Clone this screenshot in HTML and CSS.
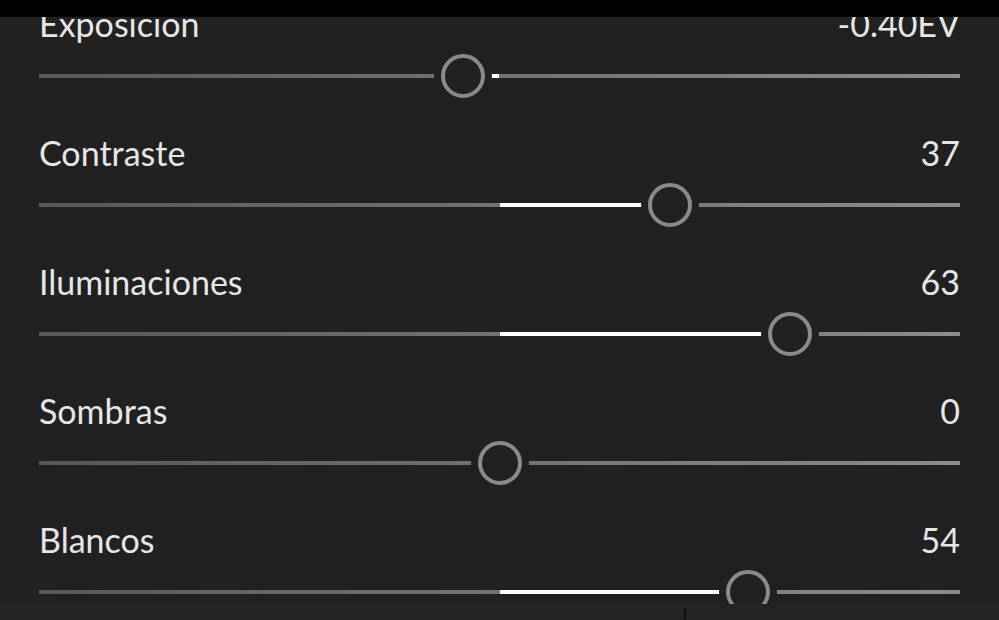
FILE: index.html
```html
<!DOCTYPE html>
<html lang="es">
<head>
  <meta charset="UTF-8" />
  <meta name="viewport" content="width=device-width, initial-scale=1.0"/>
  <title>Luz</title>
  <link rel="stylesheet" href="styles.css">
</head>
<body>

  <div class="status-bar"></div>

  <div class="panel">
    <div class="adjust">
      <div class="adjust-head"><span>Exposición</span><span>-0.40EV</span></div>
      <div class="track">
        <span class="fill" style="left: 46%; width: 4%;"></span>
        <span class="thumb" style="left: 46%;"></span>
      </div>
    </div>

    <div class="adjust">
      <div class="adjust-head"><span>Contraste</span><span>37</span></div>
      <div class="track">
        <span class="fill" style="left: 50%; width: 18.5%;"></span>
        <span class="thumb" style="left: 68.5%;"></span>
      </div>
    </div>

    <div class="adjust">
      <div class="adjust-head"><span>Iluminaciones</span><span>63</span></div>
      <div class="track">
        <span class="fill" style="left: 50%; width: 31.5%;"></span>
        <span class="thumb" style="left: 81.5%;"></span>
      </div>
    </div>

    <div class="adjust">
      <div class="adjust-head"><span>Sombras</span><span>0</span></div>
      <div class="track">
        <span class="thumb" style="left: 50%;"></span>
      </div>
    </div>

    <div class="adjust">
      <div class="adjust-head"><span>Blancos</span><span>54</span></div>
      <div class="track">
        <span class="fill" style="left: 50%; width: 27%;"></span>
        <span class="thumb" style="left: 77%;"></span>
      </div>
    </div>
  </div>

  <div class="bottom-bar"><span class="divider"></span></div>

</body>
</html>
```

FILE: styles.css
```css
body {
  margin: 0;
  padding: 0;
  background: #212121;
  font-family: Lato, "Open Sans", sans-serif;
  color: #e6e6e6;
  height: 620px;
  overflow: hidden;
}

.status-bar {
  position: fixed;
  top: 0;
  left: 0;
  right: 0;
  height: 17px;
  background: #000;
  z-index: 10;
}

.panel {
  padding: 4px 39px 0;
}

.adjust {
  height: 129px;
}

.adjust-head {
  display: flex;
  justify-content: space-between;
  font-size: 34px;
  line-height: 40px;
}

.track {
  position: relative;
  height: 4px;
  margin-top: 30px;
  background: linear-gradient(to right, #585858, #8c8c8c);
}

.fill {
  position: absolute;
  top: 0;
  height: 4px;
  background: #fff;
}

.thumb {
  position: absolute;
  top: 2px;
  width: 36px;
  height: 36px;
  margin: -22px 0 0 -22px;
  border: 4px solid #8a8a8a;
  border-radius: 50%;
  background: #212121;
  box-shadow: 0 0 0 7px #212121;
}

.bottom-bar {
  position: fixed;
  left: 0;
  right: 0;
  bottom: 0;
  height: 16px;
  background: #242424;
  z-index: 10;
}

.divider {
  position: absolute;
  left: 684px;
  top: 5px;
  bottom: 0;
  width: 2px;
  background: #0e0e0e;
}
```
